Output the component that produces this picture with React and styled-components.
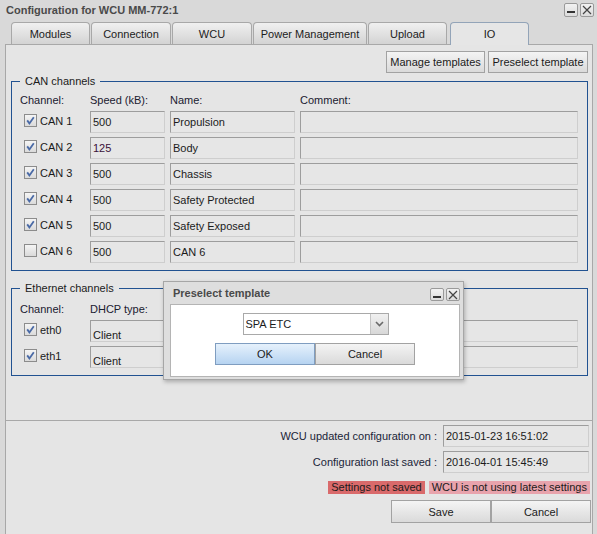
import React from 'react';
import styled, { createGlobalStyle } from 'styled-components';

const GlobalStyle = createGlobalStyle`
    html, body {
        margin: 0;
        padding: 0;
    }
    body {
        font-family: "Liberation Sans", Arial, sans-serif;
        font-size: 11px;
        color: #1b1b1b;
    }
`;

const Window = styled.div`
    position: relative;
    width: 597px;
    height: 534px;
    box-sizing: border-box;
    background: #d9d9d9;
    padding: 0 4px 0 5px;
    display: flex;
    flex-direction: column;
    overflow: hidden;
`;

const TitleBar = styled.div`
    height: 22px;
    flex: none;
    display: flex;
    align-items: flex-start;
    justify-content: space-between;
    margin: 0 -1px 0 1px;
`;

const Title = styled.div`
    font-weight: bold;
    font-size: 11px;
    color: #4a4a4a;
    line-height: 20px;
`;

const WinButtons = styled.div`
    display: flex;
    gap: 2px;
    padding-top: ${p => p.top || 3}px;
`;

const WinButton = styled.div`
    width: 14px;
    height: ${p => p.h || 14}px;
    box-sizing: border-box;
    border: 1px solid #9a9a9a;
    border-radius: 2px;
    background: linear-gradient(#f2f2f2, #dcdcdc);
    display: flex;
    align-items: center;
    justify-content: center;
`;

const TabStrip = styled.div`
    height: 22px;
    flex: none;
    display: flex;
    align-items: flex-end;
    gap: 1px;
    padding-left: 6px;
    position: relative;
    z-index: 1;
`;

const Tab = styled.div`
    width: ${p => p.w}px;
    height: ${p => (p.active ? 23 : 22)}px;
    margin-bottom: ${p => (p.active ? -1 : 0)}px;
    margin-left: ${p => (p.active ? 2 : 0)}px;
    box-sizing: border-box;
    border: 1px solid ${p => (p.active ? '#93a4b8' : '#a8a8a8')};
    border-bottom: none;
    border-radius: 4px 4px 0 0;
    background: ${p => (p.active ? '#e6e6e6' : 'linear-gradient(#f0f0f0, #d3d3d3)')};
    text-align: center;
    line-height: 22px;
    color: #1c1c1c;
    white-space: nowrap;
`;

const Frame = styled.div`
    flex: 1;
    border: 1px solid #a8a8a8;
    border-bottom: none;
    background: #e5e5e5;
    display: flex;
    flex-direction: column;
`;

const Panel = styled.div`
    height: 376px;
    box-sizing: border-box;
    border-bottom: 1px solid #a8a8a8;
    padding: 6px 4px 0 5px;
    display: flex;
    flex-direction: column;
`;

const Toolbar = styled.div`
    display: flex;
    justify-content: flex-end;
    gap: 3px;
`;

const Button = styled.button`
    height: ${p => p.h || 22}px;
    width: ${p => (p.w ? p.w + 'px' : 'auto')};
    box-sizing: border-box;
    padding: 0 2px;
    border: 1px solid ${p => (p.primary ? '#7f9dc0' : '#a2a2a2')};
    background: ${p => (p.primary
        ? 'linear-gradient(#e6f1fc, #b6d3f1)'
        : 'linear-gradient(#f4f4f4, #dadada)')};
    font-family: "Liberation Sans", Arial, sans-serif;
    font-size: 11px;
    color: #1b1b1b;
    white-space: nowrap;
    cursor: pointer;
`;

const Group = styled.fieldset`
    margin: ${p => p.mt}px 0 0 0;
    padding: ${p => p.pt}px 9px ${p => p.pb}px 8px;
    border: 1px solid #215291;
    min-inline-size: 0;
`;

const Legend = styled.legend`
    padding: 0 5px;
    line-height: 14px;
    color: #1b1b1b;
`;

const Grid = styled.div`
    display: grid;
    grid-template-columns: ${p => p.cols};
    column-gap: 5px;
    row-gap: 4px;
    align-items: center;
`;

const Head = styled.div`
    line-height: 14px;
    color: #1a2030;
`;

const ChannelCell = styled.label`
    display: flex;
    align-items: center;
    gap: 3px;
    padding-left: 4px;
    height: 22px;
    margin-top: -3px;
`;

const Field = styled.div`
    height: 22px;
    box-sizing: border-box;
    border: 1px solid;
    border-color: #9d9d9d #cecece #cecece #9d9d9d;
    background: #e6e6e6;
    padding: ${p => (p.low ? '4px' : '0')} 2px 0;
    line-height: 20px;
    white-space: nowrap;
    overflow: hidden;
    color: ${p => p.tint || '#1b1b1b'};
`;

const Footer = styled.div`
    flex: 1;
    display: flex;
    flex-direction: column;
    align-items: flex-end;
    padding: 4px 0 0 0;
`;

const InfoRow = styled.div`
    display: flex;
    align-items: center;
    gap: 6px;
    margin-right: 3px;
    margin-bottom: 4px;
`;

const InfoLabel = styled.span`
    color: #1a2438;
`;

const InfoField = styled(Field)`
    width: 146px;
    padding-left: 2px;
`;

const Badges = styled.div`
    display: flex;
    gap: 4px;
    margin: 4px 2px 0 0;
`;

const Badge = styled.span`
    height: 13px;
    line-height: 13px;
    padding: 0 3px;
    background: ${p => p.bg};
    color: #1b1b1b;
`;

const Actions = styled.div`
    display: flex;
    margin: 6px 1px 0 0;
`;

const Dialog = styled.div`
    position: absolute;
    left: 163px;
    top: 281px;
    width: 301px;
    height: 99px;
    box-sizing: border-box;
    background: #dedede;
    border: 1px solid #a6a6a6;
    box-shadow: 1px 2px 4px rgba(0, 0, 0, 0.25);
    padding: 0 3px 0 6px;
    display: flex;
    flex-direction: column;
    z-index: 5;
`;

const DialogHead = styled.div`
    height: 22px;
    display: flex;
    justify-content: space-between;
    align-items: flex-start;
    margin-left: 3px;
`;

const DialogTitle = styled(Title)`
    line-height: 22px;
`;

const DialogBody = styled.div`
    flex: 1;
    margin-bottom: 2px;
    background: #fff;
    border: 1px solid #b4b4b4;
    display: flex;
    flex-direction: column;
    align-items: center;
    padding-top: 8px;
    gap: 8px;
`;

const Select = styled.div`
    width: 146px;
    height: 22px;
    box-sizing: border-box;
    border: 1px solid #a9a9a9;
    background: #fff;
    display: flex;
    margin-left: 1px;
`;

const SelectText = styled.div`
    flex: 1;
    line-height: 20px;
    padding-left: 2px;
`;

const SelectArrow = styled.div`
    width: 17px;
    border-left: 1px solid #c4c4c4;
    background: linear-gradient(#f0f0f0, #d8d8d8);
    display: flex;
    align-items: center;
    justify-content: center;
`;

const ButtonRow = styled.div`
    display: flex;
`;

const Check = ({ on }) => (
    <svg width="13" height="13" viewBox="0 0 13 13">
        <defs>
            <linearGradient id="cbg" x1="0" y1="0" x2="0" y2="1">
                <stop offset="0" stopColor="#f6f6f6" />
                <stop offset="1" stopColor="#d9d9d9" />
            </linearGradient>
        </defs>
        <rect x="0.5" y="0.5" width="12" height="12" fill="url(#cbg)" stroke="#8c8c8c" />
        {on && <path d="M3.2 6.4 L5.4 9.4 L9.8 3.2" fill="none" stroke="#4a6aa6" strokeWidth="1.8" />}
    </svg>
);

const MinIcon = () => (
    <svg width="8" height="8" viewBox="0 0 8 8">
        <rect x="0" y="5" width="8" height="2" fill="#333" />
    </svg>
);

const CloseIcon = () => (
    <svg width="10" height="10" viewBox="0 0 10 10">
        <path d="M1 1 L9 9 M9 1 L1 9" stroke="#444" strokeWidth="1.2" />
    </svg>
);

const Chevron = () => (
    <svg width="9" height="6" viewBox="0 0 9 6">
        <path d="M1 1 L4.5 4.5 L8 1" fill="none" stroke="#6a6a6a" strokeWidth="1.6" />
    </svg>
);

const tabs = [
    { label: 'Modules', w: 79 },
    { label: 'Connection', w: 80 },
    { label: 'WCU', w: 80 },
    { label: 'Power Management', w: 114 },
    { label: 'Upload', w: 79 },
    { label: 'IO', w: 79, active: true },
];

const canChannels = [
    { name: 'CAN 1', speed: '500', label: 'Propulsion', on: true },
    { name: 'CAN 2', speed: '125', label: 'Body', on: true, tint: '#3a1038' },
    { name: 'CAN 3', speed: '500', label: 'Chassis', on: true },
    { name: 'CAN 4', speed: '500', label: 'Safety Protected', on: true },
    { name: 'CAN 5', speed: '500', label: 'Safety Exposed', on: true },
    { name: 'CAN 6', speed: '500', label: 'CAN 6', on: false },
];

const ethChannels = [
    { name: 'eth0', dhcp: 'Client' },
    { name: 'eth1', dhcp: 'Client' },
];

export default function App() {
    return (
        <Window>
            <GlobalStyle />
            <TitleBar>
                <Title>Configuration for WCU MM-772:1</Title>
                <WinButtons>
                    <WinButton><MinIcon /></WinButton>
                    <WinButton><CloseIcon /></WinButton>
                </WinButtons>
            </TitleBar>

            <TabStrip>
                {tabs.map(t => (
                    <Tab key={t.label} w={t.w} active={t.active}>{t.label}</Tab>
                ))}
            </TabStrip>

            <Frame>
                <Panel>
                    <Toolbar>
                        <Button w={99}>Manage templates</Button>
                        <Button w={100}>Preselect template</Button>
                    </Toolbar>

                    <Group mt={1} pt={5} pb={7}>
                        <Legend>CAN channels</Legend>
                        <Grid cols="65px 75px 125px 1fr">
                            <Head>Channel:</Head>
                            <Head>Speed (kB):</Head>
                            <Head>Name:</Head>
                            <Head>Comment:</Head>
                            {canChannels.map(c => (
                                <React.Fragment key={c.name}>
                                    <ChannelCell>
                                        <Check on={c.on} />
                                        {c.name}
                                    </ChannelCell>
                                    <Field tint={c.tint}>{c.speed}</Field>
                                    <Field>{c.label}</Field>
                                    <Field />
                                </React.Fragment>
                            ))}
                        </Grid>
                    </Group>

                    <Group mt={10} pt={7} pb={7}>
                        <Legend>Ethernet channels</Legend>
                        <Grid cols="65px 150px 1fr">
                            <Head>Channel:</Head>
                            <Head>DHCP type:</Head>
                            <Head>IP address:</Head>
                            {ethChannels.map(e => (
                                <React.Fragment key={e.name}>
                                    <ChannelCell>
                                        <Check on />
                                        {e.name}
                                    </ChannelCell>
                                    <Field low>{e.dhcp}</Field>
                                    <Field />
                                </React.Fragment>
                            ))}
                        </Grid>
                    </Group>
                </Panel>

                <Footer>
                    <InfoRow>
                        <InfoLabel>WCU updated configuration on :</InfoLabel>
                        <InfoField>2015-01-23 16:51:02</InfoField>
                    </InfoRow>
                    <InfoRow>
                        <InfoLabel>Configuration last saved :</InfoLabel>
                        <InfoField>2016-04-01 15:45:49</InfoField>
                    </InfoRow>
                    <Badges>
                        <Badge bg="#d96a6b">Settings not saved</Badge>
                        <Badge bg="#e8a3ac">WCU is not using latest settings</Badge>
                    </Badges>
                    <Actions>
                        <Button w={100} h={23}>Save</Button>
                        <Button w={100} h={23}>Cancel</Button>
                    </Actions>
                </Footer>
            </Frame>

            <Dialog>
                <DialogHead>
                    <DialogTitle>Preselect template</DialogTitle>
                    <WinButtons top={6}>
                        <WinButton h={13}><MinIcon /></WinButton>
                        <WinButton h={13}><CloseIcon /></WinButton>
                    </WinButtons>
                </DialogHead>
                <DialogBody>
                    <Select>
                        <SelectText>SPA ETC</SelectText>
                        <SelectArrow><Chevron /></SelectArrow>
                    </Select>
                    <ButtonRow>
                        <Button w={100} primary>OK</Button>
                        <Button w={100}>Cancel</Button>
                    </ButtonRow>
                </DialogBody>
            </Dialog>
        </Window>
    );
}
